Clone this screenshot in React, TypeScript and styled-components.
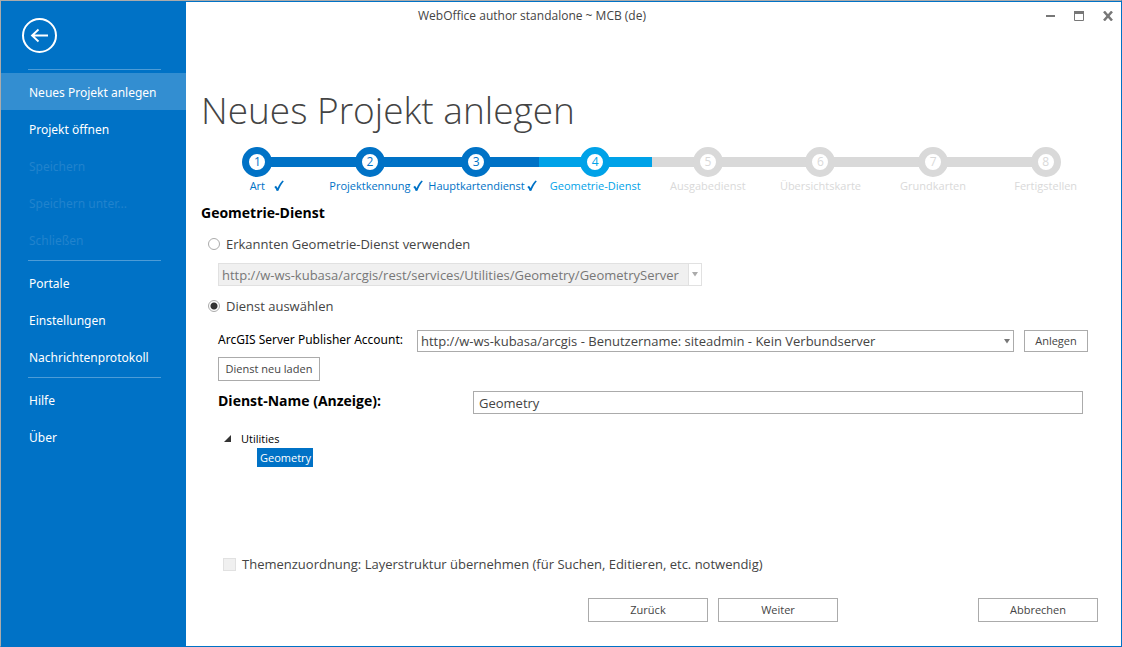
import React, { useState } from 'react';
import styled, { createGlobalStyle } from 'styled-components';

const BLUE = '#0072c6';
const CYAN = '#00a2e8';
const MUTED = '#d9d9d9';
const WIDE_FONT = "'Noto Sans', 'Open Sans', sans-serif";

const GlobalStyle = createGlobalStyle`
  *, *::before, *::after { box-sizing: border-box; }
  body {
    margin: 0;
    background: #fff;
    color: #444;
    font-family: 'Open Sans', 'Noto Sans', sans-serif;
    font-size: 13px;
  }
  button, input, select { font-family: inherit; color: inherit; margin: 0; }
`;

const Window = styled.div`
  display: flex;
  min-height: 100vh;
  border-top: 1px solid #ababab;
  border-left: 1px solid #ababab;
  border-right: 1px solid ${BLUE};
  border-bottom: 1px solid ${BLUE};
`;

const Sidebar = styled.nav`
  flex: 0 0 185px;
  background: ${BLUE};
  padding-top: 17px;
`;

const BackButton = styled.button`
  display: block;
  width: 36px;
  height: 36px;
  margin: 0 0 15px 20px;
  padding: 0;
  border: 0;
  background: none;
`;

const Separator = styled.hr`
  height: 1px;
  margin: 0 25px 0 27px;
  border: 0;
  background: #4d9cd7;
`;

const MenuGroup = styled.div`
  padding: 3px 0 2px;
`;

const MenuItem = styled.button<{ $active?: boolean }>`
  display: block;
  width: 100%;
  height: 37px;
  padding: 2px 0 0 28px;
  border: 0;
  background: ${p => (p.$active ? '#338ed1' : 'none')};
  color: #fff;
  font-family: ${WIDE_FONT};
  font-size: 12px;
  text-align: left;
  &:disabled { color: #2183cd; }
`;

const Main = styled.main`
  flex: 1;
  min-width: 0;
  display: flex;
  flex-direction: column;
  border-top: 1px solid ${BLUE};
`;

const TitleBar = styled.header`
  display: flex;
  gap: 3px;
  height: 28px;
`;

const WindowTitle = styled.div`
  flex: 1;
  padding-right: 156px;
  line-height: 28px;
  font-size: 12px;
  text-align: center;
`;

const WindowButton = styled.button`
  width: 26px;
  padding: 0;
  border: 0;
  background: none;
  svg { display: block; margin: 0 auto; }
`;

const Content = styled.div`
  flex: 1;
  display: flex;
  flex-direction: column;
  padding: 52px 23px 24px 15px;
`;

const PageTitle = styled.h1`
  margin: 0 0 9px;
  font-size: 37px;
  line-height: 56px;
  font-weight: 300;
`;

const Stepper = styled.ol`
  display: grid;
  grid-template-columns: repeat(8, 1fr);
  margin: 0 -4px 0 0;
  padding: 0;
  list-style: none;
`;

const Step = styled.li<{ $color: string }>`
  color: ${p => p.$color};
`;

const Track = styled.div<{ $shifted?: boolean }>`
  display: grid;
  grid-template-columns: ${p => (p.$shifted ? '35fr 26px 47fr' : '1fr 26px 1fr')};
  align-items: center;
`;

const Bar = styled.span<{ $visible: boolean }>`
  height: 10px;
  background: ${p => (p.$visible ? 'currentColor' : 'none')};
`;

const Marker = styled.span`
  width: 30px;
  height: 30px;
  margin: 0 -2px;
  border: 7px solid currentColor;
  border-radius: 50%;
  font-size: 12px;
  line-height: 16px;
  text-align: center;
`;

const StepLabel = styled.div<{ $balanced: boolean }>`
  display: flex;
  justify-content: center;
  align-items: center;
  gap: 2px;
  padding-left: ${p => (p.$balanced ? 12 : 0)}px;
  font-size: 11px;
  line-height: 18px;
  white-space: nowrap;
`;

const StepText = styled.span`
  min-width: 30px;
  text-align: center;
`;

const SectionTitle = styled.h2`
  margin: 8px 0 11px;
  color: #000;
  font-size: 14px;
  line-height: 20px;
  font-weight: 700;
`;

const ChoiceRow = styled.div`
  display: flex;
  align-items: center;
  gap: 6px;
  height: 20px;
  padding-left: 7px;
`;

const Radio = styled.input`
  appearance: none;
  width: 12px;
  height: 12px;
  border: 1px solid #ababab;
  border-radius: 50%;
  background: #fff;
  &:checked { background: radial-gradient(circle, #333 3px, #fff 4px); }
`;

const Checkbox = styled.input`
  appearance: none;
  width: 13px;
  height: 13px;
  border: 1px solid #e1e1e1;
  background: #f0f0f0;
`;

const Details = styled.div`
  padding-left: 17px;
`;

const SelectFrame = styled.div<{ $detected?: boolean }>`
  position: relative;
  display: flex;
  flex: ${p => (p.$detected ? '0 0 484px' : '1')};
  svg {
    position: absolute;
    top: 9px;
    right: 4px;
    pointer-events: none;
  }
`;

const Select = styled.select`
  appearance: none;
  width: 100%;
  height: 22px;
  padding: 0 16px 0 3px;
  border: 1px solid #ababab;
  border-radius: 0;
  background: #fff;
  font-size: 13px;
  &:disabled {
    height: 23px;
    border-color: #e1e1e1;
    background: linear-gradient(to left, #fff 12px, #e1e1e1 12px, #e1e1e1 13px, #f0f0f0 13px);
    color: #777;
    opacity: 1;
  }
`;

const DetectedRow = styled.div`
  display: flex;
  padding: 9px 0 10px 17px;
`;

const AccountRow = styled.div`
  display: flex;
  align-items: flex-start;
  gap: 10px;
  padding: 14px 10px 5px 0;
`;

const FieldLabel = styled.label`
  min-width: 189px;
  color: #000;
  font-family: ${WIDE_FONT};
  font-size: 12px;
  line-height: 20px;
  white-space: nowrap;
`;

const PushButton = styled.button<{ $width: number; $height?: number }>`
  width: ${p => p.$width}px;
  height: ${p => p.$height ?? 24}px;
  padding: 0 0 2px;
  border: 1px solid #ababab;
  background: #fff;
  font-size: 11px;
`;

const NameRow = styled.div`
  display: flex;
  align-items: flex-start;
  padding: 10px 15px 15px 0;
`;

const NameLabel = styled.label`
  flex: 0 0 255px;
  color: #000;
  font-size: 14px;
  line-height: 20px;
  font-weight: 700;
`;

const TextInput = styled.input`
  flex: 1;
  min-width: 0;
  height: 23px;
  padding: 0 5px;
  border: 1px solid #ababab;
  font-size: 13px;
`;

const Tree = styled.ul`
  margin: 0;
  padding: 0 0 0 6px;
  list-style: none;
  color: #000;
  font-size: 11px;
  line-height: 19px;
`;

const TreeNode = styled.div`
  display: flex;
  align-items: center;
  gap: 10px;
`;

const Branch = styled.ul`
  margin: 0;
  padding: 0 0 0 33px;
  list-style: none;
`;

const Leaf = styled.li`
  width: max-content;
  padding: 0 2px 0 3px;
  background: ${BLUE};
  color: #fff;
`;

const MappingRow = styled.div`
  display: flex;
  align-items: center;
  gap: 6px;
  margin-top: auto;
  padding: 0 0 24px 22px;
  line-height: 20px;
`;

const Footer = styled.footer`
  display: flex;
  justify-content: flex-end;
  gap: 10px;
  button:last-child { margin-left: 130px; }
`;

const Tick = () => (
  <svg width="10" height="12" viewBox="0 0 10 12" aria-hidden="true">
    <path d="M.3 7L2 5.800L3.600 8C5 5 6.600 2.400 8.600 .6L9.800 1.200C7.500 4 5.700 7 4.400 10.800L2.700 11C2.200 9.500 1.400 8.100 .3 7Z" fill="currentColor" />
  </svg>
);

const Caret = ({ color }: { color: string }) => (
  <svg width="6" height="5" viewBox="0 0 6 5" aria-hidden="true">
    <path d="M0 0H6L3 4.5Z" fill={color} />
  </svg>
);

const steps = [
  'Art', 'Projektkennung', 'Hauptkartendienst', 'Geometrie-Dienst',
  'Ausgabedienst', 'Übersichtskarte', 'Grundkarten', 'Fertigstellen',
];
const CURRENT = 3;

const stepColor = (i: number) => (i < CURRENT ? BLUE : i === CURRENT ? CYAN : MUTED);

export default function App() {
  const [source, setSource] = useState('choose');
  const [name, setName] = useState('Geometry');

  return (
    <>
      <GlobalStyle />
      <Window>
        <Sidebar>
          <BackButton aria-label="Zurück">
            <svg width="36" height="36" viewBox="0 0 36 36" fill="none" stroke="#fff">
              <circle cx="18.5" cy="17.5" r="16.5" strokeWidth="2" />
              <path d="M27 17.5H11M17.5 11.5L11 17.5L17.5 23.5" strokeWidth="1.8" />
            </svg>
          </BackButton>
          <Separator />
          <MenuGroup>
            <MenuItem $active>Neues Projekt anlegen</MenuItem>
            <MenuItem>Projekt öffnen</MenuItem>
            <MenuItem disabled>Speichern</MenuItem>
            <MenuItem disabled>Speichern unter...</MenuItem>
            <MenuItem disabled>Schließen</MenuItem>
          </MenuGroup>
          <Separator />
          <MenuGroup>
            <MenuItem>Portale</MenuItem>
            <MenuItem>Einstellungen</MenuItem>
            <MenuItem>Nachrichtenprotokoll</MenuItem>
          </MenuGroup>
          <Separator />
          <MenuGroup>
            <MenuItem>Hilfe</MenuItem>
            <MenuItem>Über</MenuItem>
          </MenuGroup>
        </Sidebar>

        <Main>
          <TitleBar>
            <WindowTitle>WebOffice author standalone ~ MCB (de)</WindowTitle>
            <WindowButton aria-label="Minimieren">
              <svg width="10" height="10"><path d="M1 5H10" stroke="#777" strokeWidth="2" /></svg>
            </WindowButton>
            <WindowButton aria-label="Maximieren">
              <svg width="10" height="10" fill="none" stroke="#777">
                <path d="M.5 .5H9.500V9.500H.5Z" /><path d="M0 1.500H10" strokeWidth="3" />
              </svg>
            </WindowButton>
            <WindowButton aria-label="Schließen">
              <svg width="10" height="10"><path d="M1 .5L9 9.500M9 .5L1 9.500" stroke="#777" strokeWidth="2.500" /></svg>
            </WindowButton>
          </TitleBar>

          <Content>
            <PageTitle>Neues Projekt anlegen</PageTitle>
            <Stepper>
              {steps.map((label, i) => (
                <Step key={label} $color={stepColor(i)}>
                  <Track $shifted={i === 2}>
                    <Bar $visible={i > 0} />
                    <Marker>{i + 1}</Marker>
                    <Bar $visible={i < steps.length - 1} />
                  </Track>
                  <StepLabel $balanced={i < CURRENT - 1}>
                    <StepText>{label}</StepText>
                    {i < CURRENT && <Tick />}
                  </StepLabel>
                </Step>
              ))}
            </Stepper>

            <SectionTitle>Geometrie-Dienst</SectionTitle>
            <ChoiceRow>
              <Radio type="radio" id="detected" name="source" checked={source === 'detected'} onChange={() => setSource('detected')} />
              <label htmlFor="detected">Erkannten Geometrie-Dienst verwenden</label>
            </ChoiceRow>
            <DetectedRow>
              <SelectFrame $detected>
                <Select disabled aria-label="Erkannter Geometrie-Dienst">
                  <option>http://w-ws-kubasa/arcgis/rest/services/Utilities/Geometry/GeometryServer</option>
                </Select>
                <Caret color="#ababab" />
              </SelectFrame>
            </DetectedRow>
            <ChoiceRow>
              <Radio type="radio" id="choose" name="source" checked={source === 'choose'} onChange={() => setSource('choose')} />
              <label htmlFor="choose">Dienst auswählen</label>
            </ChoiceRow>

            <Details>
              <AccountRow>
                <FieldLabel htmlFor="account">ArcGIS Server Publisher Account:</FieldLabel>
                <SelectFrame>
                  <Select id="account">
                    <option>http://w-ws-kubasa/arcgis - Benutzername: siteadmin - Kein Verbundserver</option>
                  </Select>
                  <Caret color="#777" />
                </SelectFrame>
                <PushButton $width={64} $height={22}>Anlegen</PushButton>
              </AccountRow>
              <PushButton $width={102}>Dienst neu laden</PushButton>
              <NameRow>
                <NameLabel htmlFor="name">Dienst-Name (Anzeige):</NameLabel>
                <TextInput id="name" value={name} onChange={e => setName(e.target.value)} />
              </NameRow>
              <Tree>
                <li>
                  <TreeNode>
                    <svg width="7" height="7" aria-hidden="true"><path d="M7 0V7H0Z" fill="#333" /></svg>
                    Utilities
                  </TreeNode>
                  <Branch>
                    <Leaf>Geometry</Leaf>
                  </Branch>
                </li>
              </Tree>
            </Details>

            <MappingRow>
              <Checkbox type="checkbox" id="mapping" disabled />
              <label htmlFor="mapping">Themenzuordnung: Layerstruktur übernehmen (für Suchen, Editieren, etc. notwendig)</label>
            </MappingRow>
            <Footer>
              <PushButton $width={120}>Zurück</PushButton>
              <PushButton $width={120}>Weiter</PushButton>
              <PushButton $width={120}>Abbrechen</PushButton>
            </Footer>
          </Content>
        </Main>
      </Window>
    </>
  );
}
